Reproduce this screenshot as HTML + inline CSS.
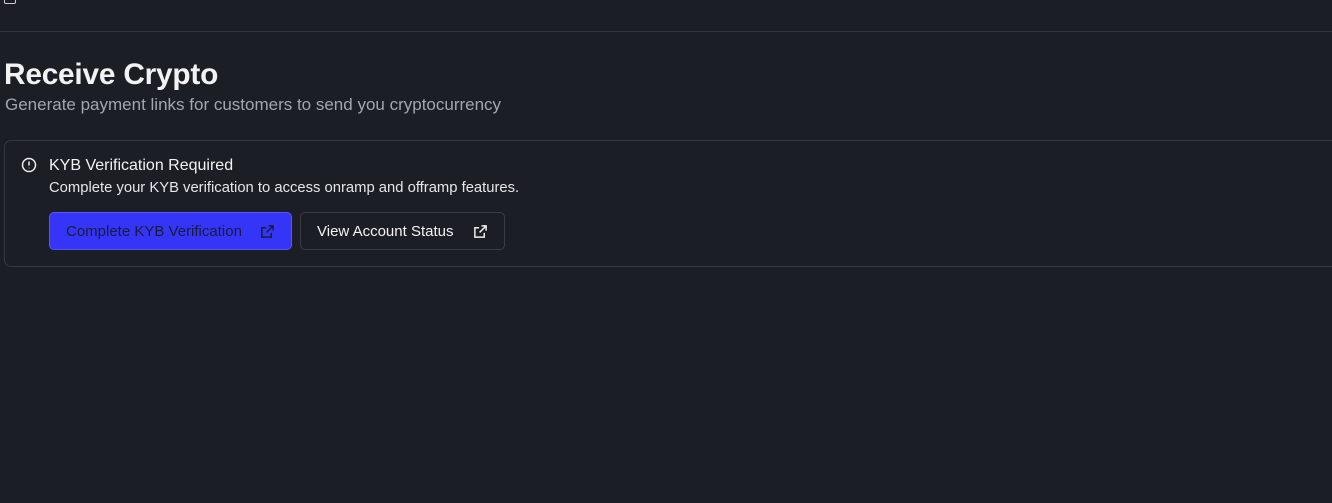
<!DOCTYPE html>
<html><head><style>
body{margin:0;width:1332px;height:503px;background:#1c1e25;font-family:"Liberation Sans",sans-serif;color:#f2f2f3;overflow:hidden;position:relative}
.top{position:absolute;left:0;right:0;top:31px;height:1px;background:#33363e}
.ic{position:absolute;left:4px;top:-6px;width:12px;height:10px;border:1.5px solid #ccc;border-radius:2px;box-sizing:border-box}
h1{position:absolute;left:4px;top:58px;margin:0;font-size:29.8px;font-weight:bold;letter-spacing:-0.2px}
.sub{position:absolute;left:5px;top:95px;font-size:17px;color:#a3a6ad}
.card{position:absolute;left:4px;top:140px;width:1340px;height:127px;border:1px solid #353840;border-radius:7px;box-sizing:border-box}
.t{position:absolute;left:49px;top:157px;font-size:16px}
.d{position:absolute;left:49px;top:180px;font-size:14.8px;color:#e6e6e8}
.b{position:absolute;top:212px;height:38px;border-radius:5px;box-sizing:border-box;font-size:15px;display:flex;align-items:center;padding-left:16px}
.b1{left:49px;width:243px;background:#3535f8;border:1px solid #5555ff;color:#1a1b3a}
.b2{left:300px;width:205px;border:1px solid #3a3d45;color:#f2f2f3}
.b svg{position:absolute;right:16px;top:11px}
</style></head><body>
<div class="ic"></div>
<div class="top"></div>
<h1>Receive Crypto</h1>
<div class="sub">Generate payment links for customers to send you cryptocurrency</div>
<div class="card"></div>
<svg style="position:absolute;left:21px;top:157px" width="16" height="16" viewBox="0 0 16 16" fill="none" stroke="#eee" stroke-width="1.5"><circle cx="8" cy="8" r="6.5"/><path d="M8 4.5v4M8 10.8v.4"/></svg>
<div class="t">KYB Verification Required</div>
<div class="d">Complete your KYB verification to access onramp and offramp features.</div>
<div class="b b1">Complete KYB Verification<svg width="15" height="15" viewBox="0 0 16 16" fill="none" stroke="#1a1b3a" stroke-width="1.6"><path d="M9 2h5v5M14 2L7 9M12 9.5V14H2V4h4.5"/></svg></div>
<div class="b b2">View Account Status<svg width="15" height="15" viewBox="0 0 16 16" fill="none" stroke="#eee" stroke-width="1.6"><path d="M9 2h5v5M14 2L7 9M12 9.5V14H2V4h4.5"/></svg></div>
</body></html>
